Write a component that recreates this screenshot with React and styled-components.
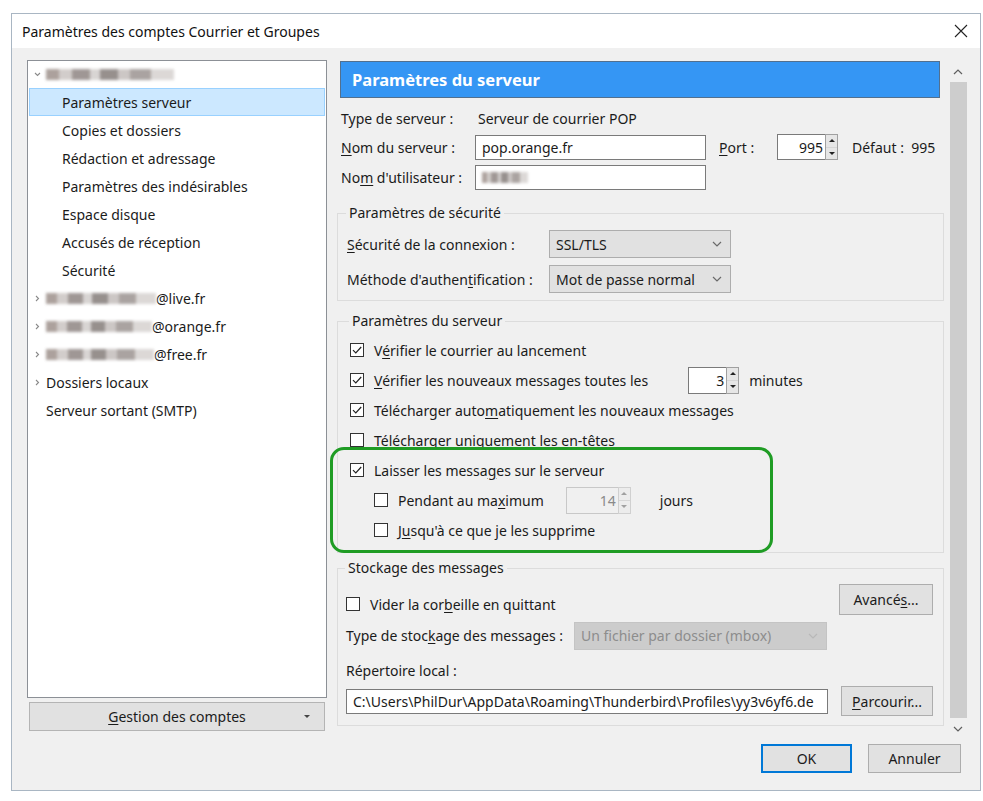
import React from 'react';
import styled, { createGlobalStyle } from 'styled-components';

const GlobalStyle = createGlobalStyle`
  html, body { margin: 0; padding: 0; background: #fff; }
  body {
    font-family: "Noto Sans", "Open Sans", sans-serif;
    font-size: 14px;
    color: #1b1b1b;
  }
  * { box-sizing: border-box; }
  u { text-underline-offset: 2px; }
`;

const Page = styled.div`
  width: 983px;
  height: 801px;
  padding: 13px 0 0 11px;
  overflow: hidden;
`;

const Dialog = styled.div`
  width: 970px;
  height: 778px;
  border: 1px solid #a9b6c3;
  background: #f0f0f0;
  display: flex;
  flex-direction: column;
`;

const TitleBar = styled.div`
  height: 34px;
  flex-shrink: 0;
  background: #fff;
  display: flex;
  align-items: center;
  justify-content: space-between;
  padding: 0 12px 0 10px;
  font-size: 14px;
  color: #111;
`;

const Body = styled.div`
  display: flex;
  padding: 12px 0 0 15px;
`;

const LeftCol = styled.div`
  width: 300px;
  display: flex;
  flex-direction: column;
`;

const Tree = styled.div`
  height: 638px;
  background: #fff;
  border: 1px solid #8c9096;
`;

const TreeRow = styled.div`
  height: ${(p) => (p.first ? 27 : 28)}px;
  display: flex;
  align-items: center;
  padding-left: ${(p) => p.indent}px;
  margin: 0 1px;
  border: 1px solid ${(p) => (p.selected ? '#99d1ff' : 'transparent')};
  background: ${(p) => (p.selected ? '#cce8ff' : 'transparent')};
  white-space: nowrap;
`;

const Twisty = styled.span`
  width: 12px;
  display: inline-flex;
  align-items: center;
`;

const Blur = styled.span`
  display: inline-block;
  width: ${(p) => p.w}px;
  height: 11px;
  background: linear-gradient(90deg, #9e918c 0 10%, #cbc5c2 10% 20%, #8f8683 20% 34%, #d2cecc 34% 42%, #857d7a 42% 56%, #c4bebc 56% 66%, #9c9491 66% 82%, #d6d2d0 82% 100%);
  filter: blur(1.4px);
  opacity: 0.85;
`;

const GestionButton = styled.div`
  margin: 4px 2px 0;
  height: 29px;
  background: #e1e1e1;
  border: 1px solid #b4b4b4;
  display: flex;
  align-items: center;
  justify-content: center;
  position: relative;
  &::after {
    content: '';
    position: absolute;
    right: 14px;
    top: 12px;
    border-left: 3px solid transparent;
    border-right: 3px solid transparent;
    border-top: 3px solid #444;
  }
`;

const RightCol = styled.div`
  width: 633px;
  margin-left: 9px;
  display: flex;
  flex-direction: column;
`;

const ScrollArea = styled.div`
  height: 677px;
  display: flex;
`;

const Content = styled.div`
  width: 610px;
  display: flex;
  flex-direction: column;
`;

const Header = styled.div`
  margin: 1px 0 0 4px;
  width: 600px;
  height: 37px;
  background: #3596f4;
  border: 1px solid #52708f;
  color: #fff;
  font-weight: 700;
  font-size: 16.5px;
  display: flex;
  align-items: center;
  padding-left: 11px;
`;

const InfoRows = styled.div`
  margin: 8px 0 0 5px;
  display: flex;
  flex-direction: column;
  gap: 4px;
`;

const Row = styled.div`
  display: flex;
  align-items: center;
  height: ${(p) => p.h || 26}px;
  margin-top: ${(p) => p.mt || 0}px;
  justify-content: ${(p) => (p.spread ? 'space-between' : 'flex-start')};
  white-space: nowrap;
`;

const Label = styled.span`
  width: ${(p) => (p.w ? `${p.w}px` : 'auto')};
  margin-left: ${(p) => p.ml || 0}px;
  flex-shrink: 0;
`;

const TextInput = styled.div`
  width: ${(p) => p.w}px;
  height: 25px;
  background: #fff;
  border: 1px solid #7a7a7a;
  display: flex;
  align-items: center;
  padding-left: 6px;
  overflow: hidden;
  white-space: nowrap;
`;

const SpinWrap = styled.div`
  display: flex;
  height: ${(p) => p.h || 26}px;
  margin-left: ${(p) => p.ml || 0}px;
`;

const SpinField = styled.div`
  width: ${(p) => p.w}px;
  height: 100%;
  background: ${(p) => (p.disabled ? '#f0f0f0' : '#fff')};
  border: 1px solid ${(p) => (p.disabled ? '#c8c8c8' : '#7a7a7a')};
  border-right: none;
  display: flex;
  align-items: center;
  justify-content: flex-end;
  padding-right: 2px;
  color: ${(p) => (p.disabled ? '#8a8a8a' : 'inherit')};
`;

const SpinButtons = styled.div`
  width: 13px;
  height: 100%;
  display: flex;
  flex-direction: column;
  border: 1px solid ${(p) => (p.disabled ? '#d0d0d0' : '#a0a0a0')};
  background: ${(p) => (p.disabled ? '#ececec' : '#e6e6e6')};
`;

const SpinHalf = styled.div`
  flex: 1;
  display: flex;
  align-items: center;
  justify-content: center;
  & + & { border-top: 1px solid ${(p) => (p.disabled ? '#d6d6d6' : '#b8b8b8')}; }
  &::before {
    content: '';
    border-left: 3px solid transparent;
    border-right: 3px solid transparent;
    ${(p) => (p.down ? 'border-top' : 'border-bottom')}: 3px solid ${(p) => (p.disabled ? '#a0a0a0' : '#222')};
  }
`;

const Spin = ({ value, w, disabled, ml, h }) => (
  <SpinWrap ml={ml} h={h}>
    <SpinField w={w} disabled={disabled}>{value}</SpinField>
    <SpinButtons disabled={disabled}>
      <SpinHalf disabled={disabled} />
      <SpinHalf disabled={disabled} down />
    </SpinButtons>
  </SpinWrap>
);

const Group = styled.fieldset`
  margin: ${(p) => p.mt || 0}px 2px 0 1px;
  padding: ${(p) => p.pad};
  border: 1px solid #dcdcdc;
  min-width: 0;
`;

const Legend = styled.legend`
  padding: 0 3px;
  margin-left: -1px;
  line-height: 16px;
`;

const SelectBox = styled.div`
  width: ${(p) => p.w}px;
  height: 28px;
  background: ${(p) => (p.disabled ? '#cccccc' : '#e1e1e1')};
  border: 1px solid ${(p) => (p.disabled ? '#c4c4c4' : '#adadad')};
  color: ${(p) => (p.disabled ? '#8d8d8d' : 'inherit')};
  display: flex;
  align-items: center;
  justify-content: space-between;
  padding: 0 8px 0 6px;
`;

const Chevron = ({ color = '#7a7a7a', up }) => (
  <svg width="10" height="6" viewBox="0 0 10 6">
    <path d={up ? 'M1 5 L5 1 L9 5' : 'M1 1 L5 5 L9 1'} fill="none" stroke={color} strokeWidth="1.2" />
  </svg>
);

const Select = ({ w, value, disabled }) => (
  <SelectBox w={w} disabled={disabled}>
    <span>{value}</span>
    <Chevron color={disabled ? '#b8b8b8' : '#6a6a6a'} />
  </SelectBox>
);

const Rows = styled.div`
  display: flex;
  flex-direction: column;
  gap: ${(p) => p.gap || 0}px;
`;

const CheckRow = styled.div`
  height: 30px;
  display: flex;
  align-items: center;
  gap: 10px;
  padding-left: ${(p) => p.indent || 0}px;
  margin-top: ${(p) => p.mt || 0}px;
  white-space: nowrap;
`;

const Box = styled.span`
  width: 14px;
  height: 14px;
  flex-shrink: 0;
  background: #fff;
  border: 1px solid #333;
  display: inline-flex;
  align-items: center;
  justify-content: center;
`;

const Check = ({ on }) => (
  <Box>
    {on && (
      <svg width="12" height="12" viewBox="0 0 12 12">
        <path d="M2 6.2 L4.8 9 L10.2 3" fill="none" stroke="#222" strokeWidth="1.2" />
      </svg>
    )}
  </Box>
);

const Highlight = styled.div`
  position: relative;
  width: 414px;
  &::after {
    content: '';
    position: absolute;
    left: -20px;
    right: -9px;
    top: -8px;
    bottom: -8px;
    border: 3px solid #1f9c24;
    border-radius: 14px;
    pointer-events: none;
  }
`;

const Spacer = styled.span`
  width: ${(p) => p.w}px;
  flex-shrink: 0;
`;

const Button = styled.div`
  width: ${(p) => p.w}px;
  height: ${(p) => p.h || 30}px;
  background: #e1e1e1;
  border: 1px solid ${(p) => (p.primary ? '#0078d7' : '#adadad')};
  box-shadow: ${(p) => (p.primary ? 'inset 0 0 0 1px #0078d7' : 'none')};
  display: flex;
  align-items: center;
  justify-content: center;
  flex-shrink: 0;
`;

const StorageTop = styled.div`
  display: flex;
  justify-content: space-between;
  align-items: flex-start;
  height: 35px;
`;

const Scrollbar = styled.div`
  width: 18px;
  margin-left: 3px;
  display: flex;
  flex-direction: column;
  align-items: center;
  padding-top: 3px;
`;

const ScrollArrow = styled.div`
  height: 17px;
  display: flex;
  align-items: center;
  justify-content: center;
`;

const Thumb = styled.div`
  width: 17px;
  flex: 1;
  margin: 2px 0;
  background: #cdcdcd;
`;

const ButtonRow = styled.div`
  display: flex;
  justify-content: flex-end;
  gap: 16px;
  margin-top: 7px;
  padding-right: 8px;
`;

const CloseIcon = () => (
  <svg width="14" height="14" viewBox="0 0 14 14">
    <path d="M1 1 L13 13 M13 1 L1 13" stroke="#222" strokeWidth="1.1" />
  </svg>
);

const Twist = ({ dir }) => (
  <Twisty>
    <svg width="7" height="7" viewBox="0 0 7 7">
      <path
        d={dir === 'down' ? 'M1 2 L3.5 4.5 L6 2' : 'M2 1 L4.5 3.5 L2 6'}
        fill="none"
        stroke="#8a8a8a"
        strokeWidth="1.1"
      />
    </svg>
  </Twisty>
);

const tree = [
  { indent: 4, twisty: 'down', blur: 128, first: true },
  { indent: 32, text: 'Paramètres serveur', selected: true },
  { indent: 32, text: 'Copies et dossiers' },
  { indent: 32, text: 'Rédaction et adressage' },
  { indent: 32, text: 'Paramètres des indésirables' },
  { indent: 32, text: 'Espace disque' },
  { indent: 32, text: 'Accusés de réception' },
  { indent: 32, text: 'Sécurité' },
  { indent: 4, twisty: 'right', blur: 110, text: '@live.fr' },
  { indent: 4, twisty: 'right', blur: 106, text: '@orange.fr' },
  { indent: 4, twisty: 'right', blur: 108, text: '@free.fr' },
  { indent: 4, twisty: 'right', text: 'Dossiers locaux' },
  { indent: 16, text: 'Serveur sortant (SMTP)' },
];

export default function App() {
  return (
    <>
      <GlobalStyle />
      <Page>
        <Dialog>
          <TitleBar>
            <span>Paramètres des comptes Courrier et Groupes</span>
            <CloseIcon />
          </TitleBar>
          <Body>
            <LeftCol>
              <Tree>
                {tree.map((item, i) => (
                  <TreeRow key={i} indent={item.indent} selected={item.selected} first={item.first}>
                    {item.twisty && <Twist dir={item.twisty} />}
                    {item.blur && <Blur w={item.blur} />}
                    {item.text && <span>{item.text}</span>}
                  </TreeRow>
                ))}
              </Tree>
              <GestionButton>
                <span>
                  <u>G</u>estion des comptes
                </span>
              </GestionButton>
            </LeftCol>

            <RightCol>
              <ScrollArea>
                <Content>
                  <Header>Paramètres du serveur</Header>
                  <InfoRows>
                    <Row h={24}>
                      <Label w={137}>Type de serveur :</Label>
                      <span>Serveur de courrier POP</span>
                    </Row>
                    <Row>
                      <Label w={134}>
                        <u>N</u>om du serveur :
                      </Label>
                      <TextInput w={231}>pop.orange.fr</TextInput>
                      <Label ml={13} w={58}>
                        <u>P</u>ort :
                      </Label>
                      <Spin value="995" w={48} />
                      <Label ml={14}>Défaut : &nbsp;995</Label>
                    </Row>
                    <Row>
                      <Label w={134}>
                        No<u>m</u> d'utilisateur :
                      </Label>
                      <TextInput w={231}>
                        <Blur w={46} />
                      </TextInput>
                    </Row>
                  </InfoRows>

                  <Group mt={15} pad="9px 8px 7px 9px">
                    <Legend>Paramètres de sécurité</Legend>
                    <Rows gap={7}>
                      <Row h={28}>
                        <Label w={202}>
                          <u>S</u>écurité de la connexion :
                        </Label>
                        <Select w={182} value="SSL/TLS" />
                      </Row>
                      <Row h={28}>
                        <Label w={202}>
                          Méthode d'authen<u>t</u>ification :
                        </Label>
                        <Select w={182} value="Mot de passe normal" />
                      </Row>
                    </Rows>
                  </Group>

                  <Group mt={12} pad="6px 8px 7px 12px">
                    <Legend>Paramètres du serveur</Legend>
                    <Rows>
                      <CheckRow>
                        <Check on />
                        <span>
                          V<u>é</u>rifier le courrier au lancement
                        </span>
                      </CheckRow>
                      <CheckRow>
                        <Check on />
                        <span>
                          <u>V</u>érifier les nouveaux messages toutes les
                        </span>
                        <Spin value="3" w={38} ml={30} h={27} />
                        <span>minutes</span>
                      </CheckRow>
                      <CheckRow>
                        <Check on />
                        <span>
                          Télécharger auto<u>m</u>atiquement les nouveaux messages
                        </span>
                      </CheckRow>
                      <CheckRow>
                        <Check />
                        <span>
                          Télécharger uni<u>q</u>uement les en-têtes
                        </span>
                      </CheckRow>
                      <Highlight>
                        <CheckRow>
                          <Check on />
                          <span>
                            Laisser les messa<u>g</u>es sur le serveur
                          </span>
                        </CheckRow>
                        <CheckRow indent={24}>
                          <Check />
                          <span>
                            Pendant au ma<u>x</u>imum
                          </span>
                          <Spin value="14" w={52} ml={12} h={27} disabled />
                          <Spacer w={9} />
                          <span>jours</span>
                        </CheckRow>
                        <CheckRow indent={24}>
                          <Check />
                          <span>
                            J<u>u</u>squ'à ce que je les supprime
                          </span>
                        </CheckRow>
                      </Highlight>
                    </Rows>
                  </Group>

                  <Group mt={7} pad="8px 10px 9px 8px">
                    <Legend>Stockage des messages</Legend>
                    <StorageTop>
                      <CheckRow mt={5}>
                        <Check />
                        <span>
                          Vider la cor<u>b</u>eille en quittant
                        </span>
                      </CheckRow>
                      <Button w={94} h={31}>
                        Avancé<u>s</u>...
                      </Button>
                    </StorageTop>
                    <Row h={29} mt={2}>
                      <Label w={228}>
                        Type de stoc<u>k</u>age des messages :
                      </Label>
                      <Select w={253} value="Un fichier par dossier (mbox)" disabled />
                    </Row>
                    <Row h={20} mt={10}>
                      <Label>Répertoire local :</Label>
                    </Row>
                    <Row h={30} mt={6} spread>
                      <TextInput w={482}>
                        C:\Users\PhilDur\AppData\Roaming\Thunderbird\Profiles\yy3v6yf6.de
                      </TextInput>
                      <Button w={92} h={30}>
                        <span>
                          <u>P</u>arcourir...
                        </span>
                      </Button>
                    </Row>
                  </Group>
                </Content>
                <Scrollbar>
                  <ScrollArrow>
                    <Chevron up color="#606060" />
                  </ScrollArrow>
                  <Thumb />
                  <ScrollArrow>
                    <Chevron color="#606060" />
                  </ScrollArrow>
                </Scrollbar>
              </ScrollArea>
              <ButtonRow>
                <Button w={91} h={29} primary>
                  OK
                </Button>
                <Button w={93} h={29}>
                  Annuler
                </Button>
              </ButtonRow>
            </RightCol>
          </Body>
        </Dialog>
      </Page>
    </>
  );
}
